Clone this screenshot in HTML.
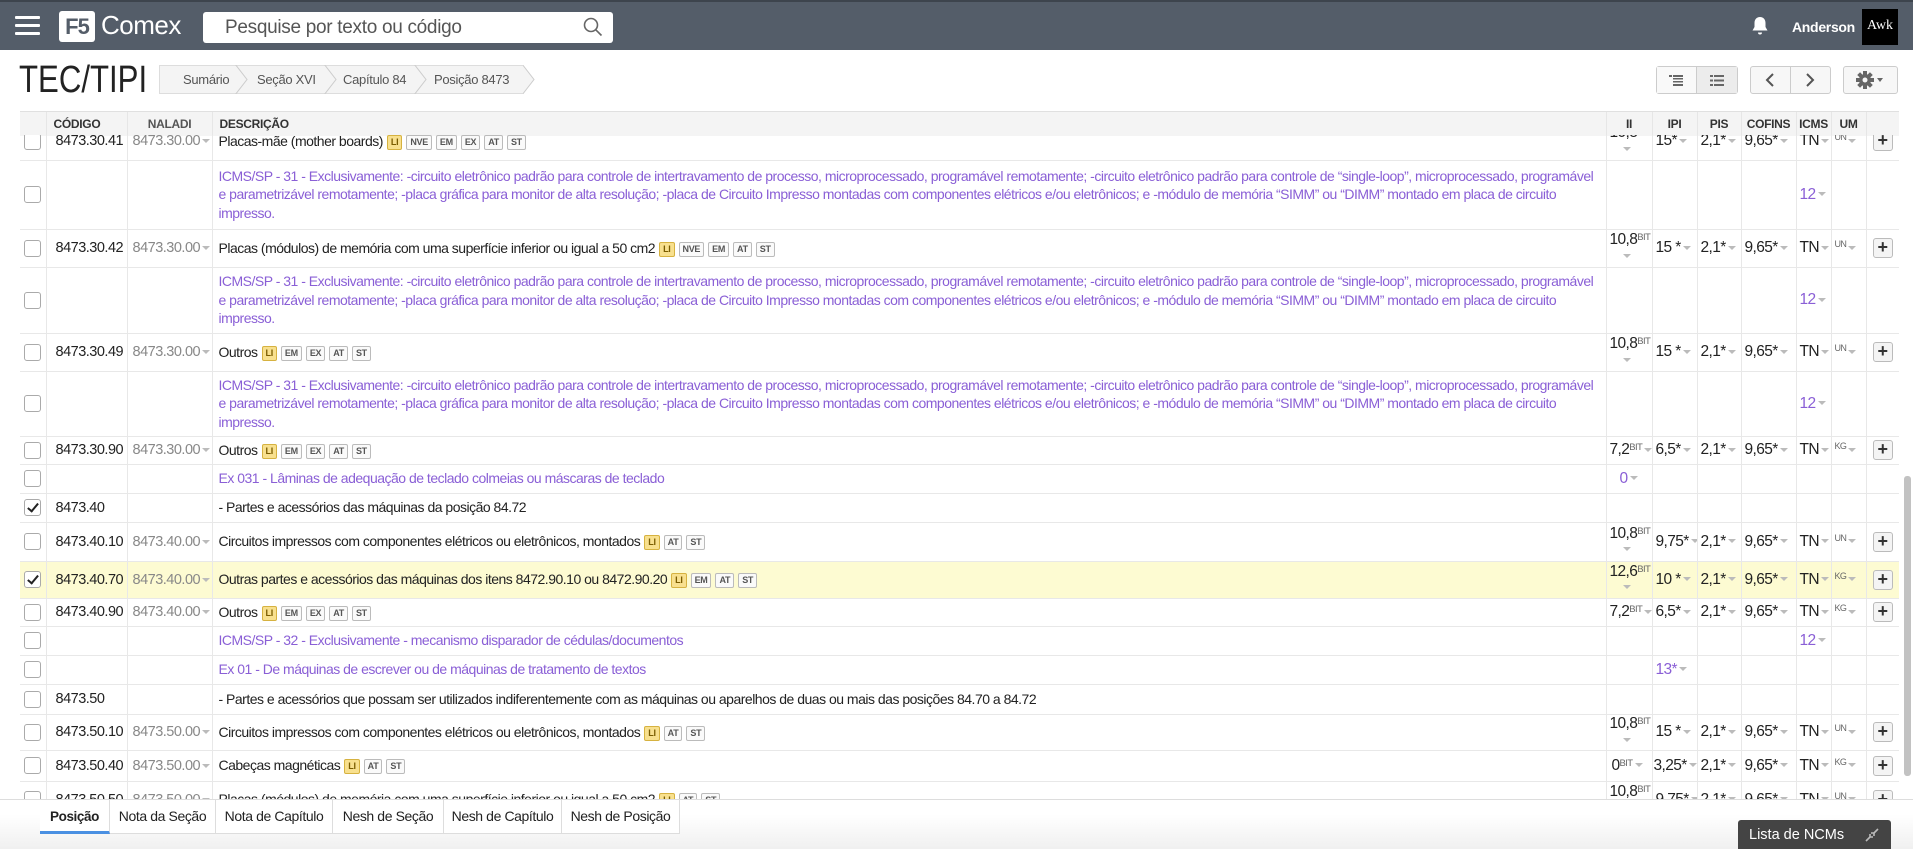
<!DOCTYPE html>
<html><head><meta charset="utf-8">
<style>
*{box-sizing:border-box;margin:0;padding:0}
body{width:1913px;height:849px;overflow:hidden;background:#fff;font-family:"Liberation Sans Narrow","Liberation Sans",sans-serif;color:#222;position:relative}
.top{position:absolute;left:0;top:0;width:1913px;height:50px;background:#545d69;border-top:2px solid #3d444d}
.hb{position:absolute;left:15px;top:14px;width:25px;height:20px}
.hb i{display:block;height:3px;background:#fff;margin-bottom:5px;border-radius:1px}
.logo{position:absolute;left:59px;top:9px;width:36px;height:31px;background:#fff;border-radius:3px;color:#545d69;font:bold 22px "Liberation Sans",sans-serif;text-align:center;line-height:31px;letter-spacing:-1px}
.comex{position:absolute;left:101px;top:8px;color:#fff;font:26px "Liberation Sans",sans-serif;letter-spacing:-0.5px}
.search{position:absolute;left:203px;top:10px;width:410px;height:31px;background:#fff;border-radius:3px;font-size:19px;color:#555;padding:5px 22px;letter-spacing:-0.3px}
.search svg{position:absolute;right:10px;top:5px}
.bell{position:absolute;left:1751px;top:14px}
.user{position:absolute;left:1792px;top:17px;color:#fff;font:bold 14px "Liberation Sans",sans-serif;letter-spacing:-0.3px}
.av{position:absolute;left:1862px;top:7px;width:36px;height:36px;background:#000;color:#fff;font:14px "Liberation Serif",serif;text-align:center;line-height:34px}
.title{position:absolute;left:19px;top:59px;font:38px "Liberation Sans",sans-serif;color:#222;transform:scaleX(0.82);transform-origin:left top}
.bc{position:absolute;left:159px;top:65px;height:29px;width:364px;background:#f4f4f4;border:1px solid #ddd;border-right:none;font-size:13px;color:#555;letter-spacing:-0.3px}
.bc span{position:absolute;top:6px}
.bc .s{position:absolute;top:-1px;width:20px;height:29px}
.btns{position:absolute;top:66px;height:28px;border:1px solid #ccc;border-radius:3px;background:#f7f7f7;display:flex}
.btns div{border-right:1px solid #ccc;display:flex;align-items:center;justify-content:center}
.btns div:last-child{border-right:none}
.tbl{position:absolute;left:20px;top:111px;width:1879px}
table{border-collapse:collapse;table-layout:fixed;width:1879px}
th{height:24px;background:#f4f4f4;font:bold 12px "Liberation Sans",sans-serif;color:#333;text-align:left;padding-left:7px;border-left:1px solid #e6e6e6;border-top:1px solid #e0e0e0;white-space:nowrap;letter-spacing:-0.3px}
th.c{text-align:center;padding-left:0}
.body{position:absolute;left:20px;top:135px;width:1879px;height:664px;overflow:hidden}
.body table{margin-top:-12px}
td{border-left:1px solid #e8e8e8;border-bottom:1px solid #e8e8e8;font-size:14.5px;vertical-align:middle;white-space:nowrap;position:relative;letter-spacing:-0.4px;overflow:hidden}
td:first-child{border-left:none}
td.d{white-space:normal;padding:0 6px;line-height:18.5px;font-size:14px;letter-spacing:-0.5px}
.cb{display:block;width:17px;height:17px;border:1px solid #aaa;border-radius:3px;margin-left:4px;background:#fff;position:relative}
.cb.k::after{content:"";position:absolute;left:5px;top:1px;width:4px;height:9px;border:solid #222;border-width:0 2px 2px 0;transform:rotate(40deg)}
.code{padding-left:9px;letter-spacing:-0.5px}
.nal{padding-left:5px;color:#888;letter-spacing:-0.5px}
.p{color:#8a5fd6}
.dd{display:inline-block;width:0;height:0;border-left:4px solid transparent;border-right:4px solid transparent;border-top:4px solid #bbb;vertical-align:middle;margin-left:2px}
.t{display:inline-block;font:bold 9px "Liberation Sans",sans-serif;letter-spacing:-0.3px;border:1px solid #bbb;border-radius:2px;padding:2px 3px;color:#555;margin-left:4px;vertical-align:middle;line-height:9px;background:#fafafa}
.t.li{background:#f8e08e;border-color:#d6b240;color:#7a5c00}
.x{padding-left:3px;font-size:15.5px;letter-spacing:-0.6px}
.ii{padding-left:3px;font-size:15.5px;line-height:16px;letter-spacing:-0.6px}
sup{font-size:9.5px;color:#666;vertical-align:top;position:relative;top:-2px}
.um{font-size:9px;color:#666;vertical-align:top}
.pl{display:block;width:20px;height:20px;border:1px solid #bbb;border-radius:3px;background:#f4f4f4;margin-left:6px;font:bold 18px "Liberation Sans",sans-serif;line-height:17px;text-align:center;color:#333}
tr.y td{background:#fdfbd2}
.sb{position:absolute;left:1904px;top:476px;width:7px;height:300px;background:#c2c2c2;border-radius:3px}
.tabs{position:absolute;left:0;top:799px;width:1913px;height:50px;background:linear-gradient(#fff 0,#fff 30%,#f0f0f0 100%);border-top:1px solid #ddd}
.tab{position:absolute;top:0;height:34px;border-right:1px solid #ddd;border-bottom:1px solid #ddd;background:#fff;font-size:14px;color:#222;text-align:center;line-height:33px;letter-spacing:-0.4px}
.ncm{position:absolute;left:1738px;top:820px;width:153px;height:29px;background:#444;border-radius:3px 3px 0 0;color:#fff;font-size:14.5px;padding:7px 11px}
</style></head><body>
<div class="top">
 <div class="hb"><i></i><i></i><i></i></div>
 <div class="logo">F5</div>
 <div class="comex">Comex</div>
 <div class="search">Pesquise por texto ou código
  <svg width="20" height="20" viewBox="0 0 20 20"><circle cx="8" cy="8" r="6.5" fill="none" stroke="#666" stroke-width="1.6"/><line x1="12.8" y1="12.8" x2="18.5" y2="18.5" stroke="#666" stroke-width="1.6"/></svg></div>
 <svg class="bell" width="18" height="20" viewBox="0 0 18 20"><path d="M9 1c-3.5 0-5.5 2.5-5.5 6v4L1.5 14.5h15L14.5 11V7C14.5 3.5 12.5 1 9 1z" fill="#fff"/><path d="M7 16.5h4a2 2 0 0 1-4 0z" fill="#fff"/></svg>
 <div class="user">Anderson</div>
 <div class="av">Awk</div>
</div>
<div class="title">TEC/TIPI</div>
<div class="bc">
 <span style="left:23px">Sumário</span>
 <svg class="s" style="left:75px" viewBox="0 0 20 29"><path d="M0 -1 L12 14.5 L0 30" fill="none" stroke="#ccc"/></svg>
 <span style="left:97px">Seção XVI</span>
 <svg class="s" style="left:164px" viewBox="0 0 20 29"><path d="M0 -1 L12 14.5 L0 30" fill="none" stroke="#ccc"/></svg>
 <span style="left:183px">Capítulo 84</span>
 <svg class="s" style="left:254px" viewBox="0 0 20 29"><path d="M0 -1 L12 14.5 L0 30" fill="none" stroke="#ccc"/></svg>
 <span style="left:274px">Posição 8473</span>
 <svg style="position:absolute;left:362px;top:-1px" width="14" height="29" viewBox="0 0 14 29"><path d="M0 0 L12 14.5 L0 29 Z" fill="#f4f4f4"/><path d="M0 -1 L12 14.5 L0 30" fill="none" stroke="#ccc"/></svg>
</div>
<div class="btns" style="left:1656px;width:82px">
 <div style="width:40px;background:#f9f9f9"><svg width="14" height="11"><g fill="#666"><rect x="0" y="0" width="3" height="2"/><rect x="4" y="0" width="10" height="2"/><rect x="4" y="3" width="10" height="1.5"/><rect x="4" y="6" width="10" height="1.5"/><rect x="4" y="9" width="10" height="2"/></g></svg></div>
 <div style="width:41px;background:#ececec"><svg width="14" height="11"><g fill="#666"><rect x="0" y="0" width="3" height="2"/><rect x="4" y="0" width="10" height="2"/><rect x="0" y="4.5" width="3" height="2"/><rect x="4" y="4.5" width="10" height="2"/><rect x="0" y="9" width="3" height="2"/><rect x="4" y="9" width="10" height="2"/></g></svg></div>
</div>
<div class="btns" style="left:1750px;width:81px">
 <div style="width:40px"><svg width="10" height="14"><path d="M8 1 L2 7 L8 13" fill="none" stroke="#555" stroke-width="2"/></svg></div>
 <div style="width:40px"><svg width="10" height="14"><path d="M2 1 L8 7 L2 13" fill="none" stroke="#555" stroke-width="2"/></svg></div>
</div>
<div class="btns" style="left:1843px;width:55px">
 <div style="width:55px"><svg width="30" height="18" viewBox="0 0 30 18"><g transform="translate(9 9)" fill="#666"><circle r="6"/><g><rect x="-2" y="-9" width="4" height="18"/><rect x="-2" y="-9" width="4" height="18" transform="rotate(45)"/><rect x="-2" y="-9" width="4" height="18" transform="rotate(90)"/><rect x="-2" y="-9" width="4" height="18" transform="rotate(135)"/></g><circle r="2.5" fill="#f7f7f7"/></g><path d="M21 7 L27 7 L24 11Z" fill="#666"/></svg></div>
</div>

<div class="tbl"><table>
<colgroup><col style="width:26px"><col style="width:81px"><col style="width:85px"><col style="width:1394px"><col style="width:46px"><col style="width:45px"><col style="width:44px"><col style="width:55px"><col style="width:35px"><col style="width:35px"><col style="width:33px"></colgroup>
<tr><th style="border-left:none"></th><th>CÓDIGO</th><th class="c" style="color:#555">NALADI</th><th>DESCRIÇÃO</th><th class="c">II</th><th class="c">IPI</th><th class="c">PIS</th><th class="c">COFINS</th><th class="c">ICMS</th><th class="c">UM</th><th></th></tr>
</table></div>

<div class="body"><table>
<colgroup><col style="width:26px"><col style="width:81px"><col style="width:85px"><col style="width:1394px"><col style="width:46px"><col style="width:45px"><col style="width:44px"><col style="width:55px"><col style="width:35px"><col style="width:35px"><col style="width:33px"></colgroup>

<tr style="height:37px"><td><span class="cb"></span></td><td class="code">8473.30.41</td><td class="nal">8473.30.00<i class="dd"></i></td><td class="d">Placas-mãe (mother boards)<span class="t li">LI</span><span class="t">NVE</span><span class="t">EM</span><span class="t">EX</span><span class="t">AT</span><span class="t">ST</span></td><td class="ii">10,8<sup>BIT</sup><br><i class="dd" style="margin-left:13px"></i></td><td class="x">15*<i class="dd"></i></td><td class="x">2,1*<i class="dd"></i></td><td class="x">9,65*<i class="dd"></i></td><td class="x">TN<i class="dd"></i></td><td class="x"><span class="um">UN</span><i class="dd"></i></td><td><span class="pl">+</span></td></tr>

<tr style="height:69px"><td><span class="cb"></span></td><td></td><td></td><td class="d p">ICMS/SP - 31 - Exclusivamente: -circuito eletrônico padrão para controle de intertravamento de processo, microprocessado, programável remotamente; -circuito eletrônico padrão para controle de “single-loop”, microprocessado, programável e parametrizável remotamente; -placa gráfica para monitor de alta resolução; -placa de Circuito Impresso montadas com componentes elétricos e/ou eletrônicos; e -módulo de memória “SIMM” ou “DIMM” montado em placa de circuito impresso.</td><td></td><td></td><td></td><td></td><td class="x p">12<i class="dd"></i></td><td></td><td></td></tr>

<tr style="height:38px"><td><span class="cb"></span></td><td class="code">8473.30.42</td><td class="nal">8473.30.00<i class="dd"></i></td><td class="d">Placas (módulos) de memória com uma superfície inferior ou igual a 50 cm2<span class="t li">LI</span><span class="t">NVE</span><span class="t">EM</span><span class="t">AT</span><span class="t">ST</span></td><td class="ii">10,8<sup>BIT</sup><br><i class="dd" style="margin-left:13px"></i></td><td class="x">15 *<i class="dd"></i></td><td class="x">2,1*<i class="dd"></i></td><td class="x">9,65*<i class="dd"></i></td><td class="x">TN<i class="dd"></i></td><td class="x"><span class="um">UN</span><i class="dd"></i></td><td><span class="pl">+</span></td></tr>

<tr style="height:66px"><td><span class="cb"></span></td><td></td><td></td><td class="d p">ICMS/SP - 31 - Exclusivamente: -circuito eletrônico padrão para controle de intertravamento de processo, microprocessado, programável remotamente; -circuito eletrônico padrão para controle de “single-loop”, microprocessado, programável e parametrizável remotamente; -placa gráfica para monitor de alta resolução; -placa de Circuito Impresso montadas com componentes elétricos e/ou eletrônicos; e -módulo de memória “SIMM” ou “DIMM” montado em placa de circuito impresso.</td><td></td><td></td><td></td><td></td><td class="x p">12<i class="dd"></i></td><td></td><td></td></tr>

<tr style="height:38px"><td><span class="cb"></span></td><td class="code">8473.30.49</td><td class="nal">8473.30.00<i class="dd"></i></td><td class="d">Outros<span class="t li">LI</span><span class="t">EM</span><span class="t">EX</span><span class="t">AT</span><span class="t">ST</span></td><td class="ii">10,8<sup>BIT</sup><br><i class="dd" style="margin-left:13px"></i></td><td class="x">15 *<i class="dd"></i></td><td class="x">2,1*<i class="dd"></i></td><td class="x">9,65*<i class="dd"></i></td><td class="x">TN<i class="dd"></i></td><td class="x"><span class="um">UN</span><i class="dd"></i></td><td><span class="pl">+</span></td></tr>

<tr style="height:65px"><td><span class="cb"></span></td><td></td><td></td><td class="d p">ICMS/SP - 31 - Exclusivamente: -circuito eletrônico padrão para controle de intertravamento de processo, microprocessado, programável remotamente; -circuito eletrônico padrão para controle de “single-loop”, microprocessado, programável e parametrizável remotamente; -placa gráfica para monitor de alta resolução; -placa de Circuito Impresso montadas com componentes elétricos e/ou eletrônicos; e -módulo de memória “SIMM” ou “DIMM” montado em placa de circuito impresso.</td><td></td><td></td><td></td><td></td><td class="x p">12<i class="dd"></i></td><td></td><td></td></tr>

<tr style="height:28px"><td><span class="cb"></span></td><td class="code">8473.30.90</td><td class="nal">8473.30.00<i class="dd"></i></td><td class="d">Outros<span class="t li">LI</span><span class="t">EM</span><span class="t">EX</span><span class="t">AT</span><span class="t">ST</span></td><td class="ii">7,2<sup>BIT</sup><i class="dd"></i></td><td class="x">6,5*<i class="dd"></i></td><td class="x">2,1*<i class="dd"></i></td><td class="x">9,65*<i class="dd"></i></td><td class="x">TN<i class="dd"></i></td><td class="x"><span class="um">KG</span><i class="dd"></i></td><td><span class="pl">+</span></td></tr>

<tr style="height:29px"><td><span class="cb"></span></td><td></td><td></td><td class="d p">Ex 031 - Lâminas de adequação de teclado colmeias ou máscaras de teclado</td><td class="x p" style="padding-left:13px">0<i class="dd"></i></td><td></td><td></td><td></td><td></td><td></td><td></td></tr>

<tr style="height:29px"><td><span class="cb k"></span></td><td class="code">8473.40</td><td></td><td class="d">- Partes e acessórios das máquinas da posição 84.72</td><td></td><td></td><td></td><td></td><td></td><td></td><td></td></tr>

<tr style="height:39px"><td><span class="cb"></span></td><td class="code">8473.40.10</td><td class="nal">8473.40.00<i class="dd"></i></td><td class="d">Circuitos impressos com componentes elétricos ou eletrônicos, montados<span class="t li">LI</span><span class="t">AT</span><span class="t">ST</span></td><td class="ii">10,8<sup>BIT</sup><br><i class="dd" style="margin-left:13px"></i></td><td class="x">9,75*<i class="dd"></i></td><td class="x">2,1*<i class="dd"></i></td><td class="x">9,65*<i class="dd"></i></td><td class="x">TN<i class="dd"></i></td><td class="x"><span class="um">UN</span><i class="dd"></i></td><td><span class="pl">+</span></td></tr>

<tr class="y" style="height:37px"><td><span class="cb k"></span></td><td class="code">8473.40.70</td><td class="nal">8473.40.00<i class="dd"></i></td><td class="d">Outras partes e acessórios das máquinas dos itens 8472.90.10 ou 8472.90.20<span class="t li">LI</span><span class="t">EM</span><span class="t">AT</span><span class="t">ST</span></td><td class="ii">12,6<sup>BIT</sup><br><i class="dd" style="margin-left:13px"></i></td><td class="x">10 *<i class="dd"></i></td><td class="x">2,1*<i class="dd"></i></td><td class="x">9,65*<i class="dd"></i></td><td class="x">TN<i class="dd"></i></td><td class="x"><span class="um">KG</span><i class="dd"></i></td><td><span class="pl">+</span></td></tr>

<tr style="height:28px"><td><span class="cb"></span></td><td class="code">8473.40.90</td><td class="nal">8473.40.00<i class="dd"></i></td><td class="d">Outros<span class="t li">LI</span><span class="t">EM</span><span class="t">EX</span><span class="t">AT</span><span class="t">ST</span></td><td class="ii">7,2<sup>BIT</sup><i class="dd"></i></td><td class="x">6,5*<i class="dd"></i></td><td class="x">2,1*<i class="dd"></i></td><td class="x">9,65*<i class="dd"></i></td><td class="x">TN<i class="dd"></i></td><td class="x"><span class="um">KG</span><i class="dd"></i></td><td><span class="pl">+</span></td></tr>

<tr style="height:29px"><td><span class="cb"></span></td><td></td><td></td><td class="d p">ICMS/SP - 32 - Exclusivamente - mecanismo disparador de cédulas/documentos</td><td></td><td></td><td></td><td></td><td class="x p">12<i class="dd"></i></td><td></td><td></td></tr>

<tr style="height:29px"><td><span class="cb"></span></td><td></td><td></td><td class="d p">Ex 01 - De máquinas de escrever ou de máquinas de tratamento de textos</td><td></td><td class="x p">13*<i class="dd"></i></td><td></td><td></td><td></td><td></td><td></td></tr>

<tr style="height:30px"><td><span class="cb"></span></td><td class="code">8473.50</td><td></td><td class="d">- Partes e acessórios que possam ser utilizados indiferentemente com as máquinas ou aparelhos de duas ou mais das posições 84.70 a 84.72</td><td></td><td></td><td></td><td></td><td></td><td></td><td></td></tr>

<tr style="height:36px"><td><span class="cb"></span></td><td class="code">8473.50.10</td><td class="nal">8473.50.00<i class="dd"></i></td><td class="d">Circuitos impressos com componentes elétricos ou eletrônicos, montados<span class="t li">LI</span><span class="t">AT</span><span class="t">ST</span></td><td class="ii">10,8<sup>BIT</sup><br><i class="dd" style="margin-left:13px"></i></td><td class="x">15 *<i class="dd"></i></td><td class="x">2,1*<i class="dd"></i></td><td class="x">9,65*<i class="dd"></i></td><td class="x">TN<i class="dd"></i></td><td class="x"><span class="um">UN</span><i class="dd"></i></td><td><span class="pl">+</span></td></tr>

<tr style="height:31px"><td><span class="cb"></span></td><td class="code">8473.50.40</td><td class="nal">8473.50.00<i class="dd"></i></td><td class="d">Cabeças magnéticas<span class="t li">LI</span><span class="t">AT</span><span class="t">ST</span></td><td class="ii" style="padding-left:5px">0<sup>BIT</sup><i class="dd"></i></td><td class="x" style="padding-left:1px">3,25*<i class="dd"></i></td><td class="x">2,1*<i class="dd"></i></td><td class="x">9,65*<i class="dd"></i></td><td class="x">TN<i class="dd"></i></td><td class="x"><span class="um">KG</span><i class="dd"></i></td><td><span class="pl">+</span></td></tr>

<tr style="height:37px"><td><span class="cb"></span></td><td class="code">8473.50.50</td><td class="nal">8473.50.00<i class="dd"></i></td><td class="d">Placas (módulos) de memória com uma superfície inferior ou igual a 50 cm2<span class="t li">LI</span><span class="t">AT</span><span class="t">ST</span></td><td class="ii">10,8<sup>BIT</sup><br><i class="dd" style="margin-left:13px"></i></td><td class="x">9,75*<i class="dd"></i></td><td class="x">2,1*<i class="dd"></i></td><td class="x">9,65*<i class="dd"></i></td><td class="x">TN<i class="dd"></i></td><td class="x"><span class="um">UN</span><i class="dd"></i></td><td><span class="pl">+</span></td></tr>
</table></div>
<div class="sb"></div>

<div class="tabs">
 <div class="tab" style="left:40px;width:70px;font-weight:bold;font-size:13.5px;border-bottom:3px solid #4a90e2">Posição</div>
 <div class="tab" style="left:110px;width:106px">Nota da Seção</div>
 <div class="tab" style="left:216px;width:117px">Nota de Capítulo</div>
 <div class="tab" style="left:333px;width:111px">Nesh de Seção</div>
 <div class="tab" style="left:444px;width:118px">Nesh de Capítulo</div>
 <div class="tab" style="left:562px;width:118px">Nesh de Posição</div>
</div>
<div class="ncm">Lista de NCMs
 <svg style="position:absolute;right:12px;top:8px" width="14" height="14" viewBox="0 0 14 14"><path d="M1 13 L5 9 M13 1 L9 5 M5 9 L5 6 M5 9 L8 9 M9 5 L9 8 M9 5 L6 5" stroke="#bbb" stroke-width="1.6" fill="none"/></svg>
</div>
</body></html>
